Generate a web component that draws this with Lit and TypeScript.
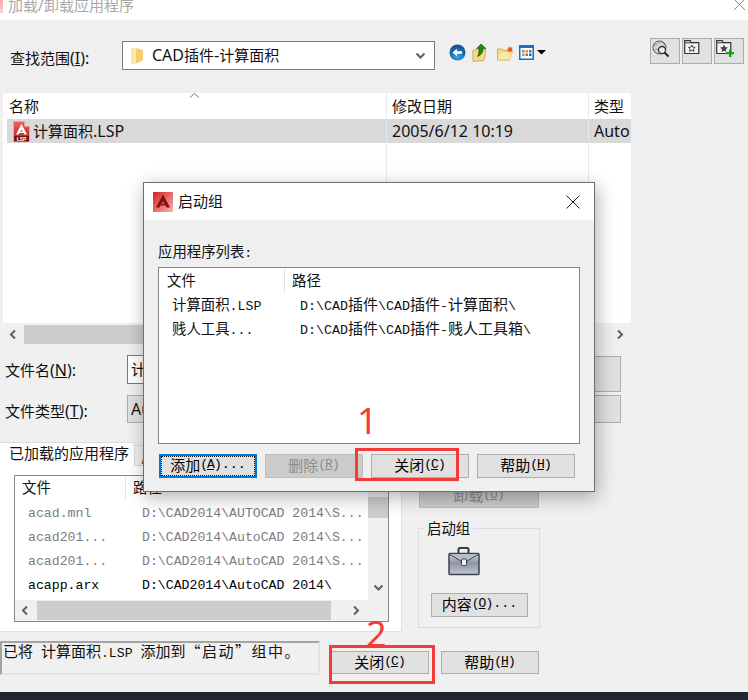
import { LitElement, html, css, svg } from "lit";
import { customElement } from "lit/decorators.js";

const CJK = /([\u3000-\u303f\u4e00-\u9fff\uff00-\uffef\u201c\u201d]+)/;
const t = (s: string) =>
  s.split(CJK).map((p, i) => (i % 2 ? html`<span class="c">${p}</span>` : p));

const chev = (d: "l" | "r" | "d" | "u") => {
  const paths = {
    l: "M7 1.5 3 5.5l4 4",
    r: "M3 1.5 7 5.5l-4 4",
    d: "M1.5 3.5l4 4 4-4",
    u: "M1.5 7.5l4-4 4 4",
  };
  return html`<svg class="chev" width="11" height="11" viewBox="0 0 11 11"><path d=${paths[d]} fill="none" stroke="#606060" stroke-width="2"/></svg>`;
};

const acadIcon = html`<svg width="17" height="21" viewBox="0 0 17 21">
  <defs><linearGradient id="fi" x1="0" y1="0" x2="0" y2="1"><stop offset="0" stop-color="#f0605a"/><stop offset="1" stop-color="#b01c1c"/></linearGradient></defs>
  <path d="M.5.5h11l5 5v15H.5z" fill="url(#fi)" stroke="#b9b9b9"/>
  <path d="M11.5.5v5h5z" fill="#f6d0cc"/>
  <path d="M8.5 3 3 13.5h2.6L8.5 8.5l2.9 5H14z" fill="#fff"/>
  <rect x="5.5" y="10.6" width="6" height="1.4" fill="#fff"/>
  <rect x="1" y="15" width="15" height="5.5" fill="#7d1414"/>
  <text x="8.5" y="19.6" font-size="5" font-family="Liberation Sans" font-weight="700" fill="#fff" text-anchor="middle">LSP</text>
</svg>`;

const dlgIcon = html`<svg width="20" height="20" viewBox="0 0 20 20">
  <defs><linearGradient id="di" x1="0" y1="0" x2="1" y2="1"><stop offset="0" stop-color="#d81f1f"/><stop offset="1" stop-color="#f7b4b0"/></linearGradient></defs>
  <rect width="20" height="20" fill="url(#di)"/>
  <path d="M10 2.5 3 15.5h3.4L10 9l3.6 6.5H17z" fill="#7a1010"/>
  <rect x="6" y="11.5" width="8" height="2" fill="#8e1a1a"/>
</svg>`;

const backIcon = svg`<svg width="17" height="17" viewBox="0 0 17 17">
  <defs><radialGradient id="b" cx=".5" cy=".75" r=".8"><stop offset="0" stop-color="#2ba7f0"/><stop offset="1" stop-color="#123f78"/></radialGradient></defs>
  <circle cx="8.5" cy="8.5" r="8" fill="url(#b)"/>
  <path d="M3.5 8.5 8 4.8v2.4h5v2.6H8v2.4z" fill="#fff"/>
</svg>`;

const upIcon = svg`<svg width="17" height="19" viewBox="0 0 17 19">
  <path d="M.8 7.5 10 5l1 2 3-.5-2 11-11 1z" fill="#f7d98a" stroke="#c9a244" stroke-width=".8"/>
  <path d="M9 1 4.5 5.5H7c0 3 0 5-1.5 8 4-1.5 5.5-4 5.5-8h3z" fill="#1e8a12" stroke="#0f5d09" stroke-width=".6"/>
</svg>`;

const newIcon = svg`<svg width="17" height="15" viewBox="0 0 17 15">
  <path d="M.5 3h5l1 1.5h6l-1 .5h4l-3 9H.5z" fill="#f6d880" stroke="#c9a244" stroke-width=".8"/>
  <path d="M.8 13.5 3.5 6.500h12l-3 7z" fill="#fbe7a8"/>
  <path d="M13 0v7M9.600 3.500h6.800M10.600 1.100l4.800 4.800M15.400 1.100l-4.800 4.800" stroke="#f9a64a" stroke-width=".7"/>
  <circle cx="13" cy="3.500" r="2.300" fill="#f05a1c"/>
</svg>`;

const viewIcon = svg`<svg width="27" height="15" viewBox="0 0 27 15">
  <rect x=".75" y=".75" width="13.500" height="13.500" fill="#fff" stroke="#1470d0" stroke-width="1.500"/>
  <rect x="0" y="0" width="15" height="3" fill="#1470d0"/>
  <rect x="3" y="5" width="2.500" height="2.500" fill="#888"/><rect x="6.500" y="5" width="2.500" height="2.500" fill="#d8a020"/><rect x="10" y="5" width="2.500" height="2.500" fill="#3f8f3f"/>
  <rect x="3" y="8.500" width="2.500" height="2.500" fill="#999"/><rect x="6.500" y="8.500" width="2.500" height="2.500" fill="#d06020"/><rect x="10" y="8.500" width="2.500" height="2.500" fill="#2060c0"/>
  <path d="M18 5h9l-4.500 4.500z" fill="#000"/>
</svg>`;

const folderIcon = html`<svg width="13" height="17" viewBox="0 0 13 17">
  <path d="M0 1h6l6 2v10l-7 3.500H0z" fill="#f6d98c"/>
  <path d="M0 1h5v15.500H0z" fill="#fbe7ae"/>
  <path d="M5 2l7 1v10l-7 3.500z" fill="#f3cd6e"/>
</svg>`;

const globeIcon = svg`<svg width="18" height="18" viewBox="0 0 18 18">
  <circle cx="7.500" cy="7.500" r="6.500" fill="#d8d8d8" stroke="#555"/>
  <path d="M2 5c3 1 3-2 6-3M3 10c2-2 4 0 4 3M10 2c1 2 2 2 3 3" fill="none" stroke="#888"/>
  <circle cx="10" cy="10" r="3.500" fill="#eee" stroke="#333" stroke-width="1.300"/>
  <path d="M12.500 12.500 16.500 16.500" stroke="#222" stroke-width="2"/>
</svg>`;

const favIcon = (plus: boolean) => svg`<svg width="${plus ? 19 : 16}" height="${plus ? 17 : 14}" viewBox="0 0 ${plus ? 19 : 16} ${plus ? 17 : 14}">
  <path d="M.7 2.500V.7h5.500l1 1.800h7.600v11H.7z" fill="#f4f4f0" stroke="#333" stroke-width="1.200"/>
  <path d="M.7 2.800h14" stroke="#333"/>
  ${plus
    ? svg`<path d="M8 4.500l1.200 2.600 2.800.3-2.100 1.900.6 2.800L8 10.700l-2.500 1.400.6-2.800L4 7.400l2.800-.3z" fill="#444"/>
       <path d="M13 9.500h2.400v2.400h2.600v2.400h-2.600V17H13v-2.700h-2.600v-2.400H13z" fill="#14a014"/>`
    : svg`<path d="M7.800 5l1 2.200 2.400.2-1.800 1.600.5 2.400-2.100-1.200-2.100 1.200.5-2.400-1.800-1.600 2.400-.2z" fill="none" stroke="#444"/>`}
</svg>`;

const caseIcon = html`<svg width="32" height="29" viewBox="0 0 32 29">
  <defs><linearGradient id="c" x1="0" y1="0" x2="0" y2="1"><stop offset="0" stop-color="#dfe2e9"/><stop offset=".45" stop-color="#8c93a3"/><stop offset="1" stop-color="#c2c6cf"/></linearGradient></defs>
  <rect x="10.500" y="1" width="10" height="7" rx="1.500" fill="none" stroke="#333a4a" stroke-width="2"/>
  <rect x="1" y="6.500" width="30" height="21" rx="1" fill="url(#c)" stroke="#3a4152" stroke-width="1.500"/>
  <path d="M1.500 7.500 13 14h6l11.500-6.500" fill="#b9bec9" stroke="#3a4152"/>
  <rect x="13.500" y="12" width="5" height="6.500" rx="1" fill="#f6f6f2" stroke="#333a4a"/>
</svg>`;

const btn = (label: string, key: string, suffix = "", cls = "") => html`<button class="btn ${cls}" tabindex="-1">
  <span class="face"><span class="c">${label}</span><span class="k">(<u>${key}</u>)</span><span class="dots">${suffix}</span></span>
</button>`;

@customElement("app-root")
export class AppRoot extends LitElement {
  static styles = css`
    :host {
      display: block;
      position: relative;
      width: 748px;
      height: 700px;
      overflow: hidden;
      background: #f0f0f0;
      color: #111;
    }
    .c { font-family: "Noto Sans CJK SC", sans-serif; }
    .ui { font: 16px/22px "Noto Sans", "Noto Sans CJK SC", sans-serif; white-space: nowrap; }
    .ui .c { font-size: 15px; }
    .mono { font: 13.2px/20px "Liberation Mono", "Noto Sans CJK SC", monospace; white-space: pre; }
    .mono .c { font-size: 14.4px; }
    .mono .p .c, .mono.p .c { font-size: 15px; }
    u { text-underline-offset: 1px; }
    .chev { display: block; }

    .title { height: 20px; background: #fff; display: flex; overflow: hidden; position: relative; }
    .title .mark { width: 3px; height: 13px; background: linear-gradient(#f7a5a0, #f9d2cf); }
    .title .name { margin: -6px 0 0 5px; color: #a9a9a9; line-height: 22px; }
    .title svg { margin: 0 2px 0 auto; }

    .toolbar { height: 73px; background: #efefef; display: flex; align-items: flex-start; padding: 21px 4px 0 10px; box-sizing: border-box; }
    .toolbar .lbl { width: 112px; margin-top: 6px; }
    .combo { width: 313px; height: 29px; box-sizing: border-box; border: 1px solid #7a7a7a; background: #fff; display: flex; align-items: center; padding: 0 8px; }
    .combo .txt { margin: -2px 0 0 8px; flex: 1; }
    .tools { display: flex; margin: 3px 0 0 14px; align-items: flex-start; }
    .tools svg { display: block; }
    .tools .up { margin-left: 6px; margin-top: -1px; }
    .tools .new { margin-left: 8px; margin-top: 2px; }
    .tools .view { margin-left: 5px; margin-top: 1px; }
    .rbtns { display: flex; gap: 2px; margin: -3px 0 0 auto; }
    .rbtn { width: 30px; height: 26px; box-sizing: border-box; border: 1px solid #adadad; background: #e1e1e1; padding: 1px 0 0 1px; }
    .rbtn svg { display: block; }

    .list { height: 230px; margin-left: 3px; width: 628px; background: #fff; display: grid; grid-template-columns: 383px 202px 43px; position: relative; overflow: hidden; }
    .col { border-left: 1px solid #e4ebf4; min-width: 0; overflow: hidden; }
    .col:first-child { border-left: 0; padding-left: 4px; }
    .hd { height: 26px; padding: 2px 0 0 5px; box-sizing: border-box; }
    .cell { height: 24px; background: #d9d9d9; display: flex; align-items: center; padding-left: 5px; }
    .col:last-child .hd, .col:last-child .cell { padding-left: 6px; }
    .col:first-child .cell { padding-left: 6px; gap: 3px; }
    .col:first-child .hd { padding-left: 2px; }
    .sort { position: absolute; left: 186px; top: -3px; }

    .hbar { height: 22px; width: 631px; display: flex; align-items: center; }
    .hbar .a1 { margin-left: 8px; width: 16px; }
    .hbar .th { width: 560px; height: 19px; background: #cdcdcd; }
    .hbar .rest { margin: 0 5px 0 auto; }

    .frow { display: flex; align-items: flex-start; padding-left: 5px; }
    .frow .lbl { width: 122px; }
    .r1 { height: 36px; margin-top: 10px; }
    .r2 { height: 28px; margin-top: 4px; margin-bottom: 19px; }
    .r1 .lbl { margin-top: 4px; }
    .r2 .lbl { margin-top: 5px; }
    .input { width: 420px; height: 29px; box-sizing: border-box; border: 1px solid #7a7a7a; background: #fff; padding: 2px 0 0 3px; overflow: hidden; }
    .load { width: 74px; height: 36px; box-sizing: border-box; margin-top: 1px; border: 1px solid #adadad; background: #e1e1e1; }
    .type { width: 494px; height: 28px; box-sizing: border-box; border: 1px solid #adadad; background: #e1e1e1; padding: 2px 0 0 3px; overflow: hidden; }

    .lower { display: flex; height: 190px; }
    .left { width: 402px; display: flex; flex-direction: column; }
    .tabs { height: 24px; display: flex; align-items: flex-end; }
    .tab { box-sizing: border-box; }
    .t1 { width: 135px; height: 24px; background: #fff; border: 1px solid #dcdcdc; border-width: 1px 1px 0 0; padding: 0 0 0 9px; line-height: 20px; }
    .t2 { width: 60px; height: 21px; background: #f0f0f0; border: 1px solid #dcdcdc; border-left: 0; padding: 0 0 0 6px; line-height: 20px; }
    .panel { flex: 1; background: #fff; border: 1px solid #dfdfdf; border-width: 0 1px 1px 0; padding: 9px 12px 9px 14px; box-sizing: border-box; }
    .apps { height: 147px; box-sizing: border-box; border: 1px solid #85888f; display: flex; flex-direction: column; background: #f0f0f0; }
    .top { flex: 1; display: flex; min-height: 0; }
    .rows { width: 353px; background: #fff; }
    .ahd { height: 24px; display: flex; overflow: hidden; }
    .ahd .a { width: 103px; height: 24px; box-sizing: content-box; padding: 1px 0 0 7px; border-right: 1px solid #e6e6e6; }
    .ahd .b { padding: 1px 0 0 7px; }
    .arow { height: 24px; display: flex; align-items: center; padding: 4px 0 0 13px; box-sizing: border-box; color: #7d7d7d; }
    .arow.on { color: #000; }
    .arow .n { width: 114px; }
    .vb { width: 20px; display: flex; flex-direction: column; align-items: center; }
    .vb .th { width: 20px; height: 21px; margin-top: 21px; background: #cdcdcd; }
    .vb .chev { margin-top: auto; margin-bottom: 7px; }
    .hb { height: 21px; display: flex; align-items: center; }
    .hb .chev:first-child { margin-left: 5px; }
    .hb .th { margin-left: 6px; width: 294px; height: 19px; background: #cdcdcd; }
    .hb .chev:last-child { margin-left: 20px; }

    .btn { display: block; width: 98px; height: 24px; padding: 0; box-sizing: border-box; border: 1px solid #adadad; background: #e1e1e1; color: #000; cursor: default; font: 13px/20px "Liberation Mono", "Noto Sans CJK SC", monospace; }
    .btn .face { display: flex; justify-content: center; align-items: center; height: 100%; box-sizing: border-box; white-space: pre; padding-bottom: 2px; }
    .btn .c { font-size: 15px; }
    .btn .k { letter-spacing: -1px; margin-right: 1px; }
    .btn .dots { font-size: 13.33px; }
    .btn.off { background: #cbcbcb; color: #8c8c8c; border-color: #bdbdbd; }
    .btn.focus { border: 2px solid #0078d7; }
    .btn.focus .face { border: 1px dotted #111; }

    .right { margin-left: 16px; width: 122px; }
    .btn.un { width: 120px; margin: 42px 0 0 1px; height: 24px; }
    fieldset { margin: 10px 0 0; padding: 0; width: 122px; height: 110px; box-sizing: border-box; border: 1px solid #dcdcdc; }
    legend { margin-left: 5px; padding: 0 3px; height: 20px; }
    .case { display: block; margin: 9px 0 0 29px; }
    .case svg { display: block; }
    .btn.content { margin: 17px 0 0 12px; width: 97px; }

    .bottom { height: 60px; display: flex; align-items: flex-start; }
    .status { width: 320px; height: 34px; margin-top: 9px; box-sizing: border-box; border: 2px solid; border-color: #a3a3a3 #e2e2e2 #e2e2e2 #a3a3a3; padding: 0 0 0 1px; line-height: 15px; }
    .status .q { letter-spacing: 1.5px; }
    .bottom .btn { margin-top: 19px; height: 23px; }
    .bottom .c1 { margin-left: 11px; }
    .bottom .c2 { margin-left: 12px; }
    .dark { height: 8px; background: #1f2630; }

    .dialog { position: absolute; left: 143px; top: 182px; width: 452px; height: 310px; box-sizing: border-box; border: 1px solid #6e6e6e; background: #efefef; box-shadow: 2px 5px 18px rgba(0, 0, 0, 0.32); }
    .dt { height: 37px; background: #fff; display: flex; align-items: center; padding: 0 14px 0 9px; }
    .dt .nm { margin: -2px 0 0 5px; flex: 1; }
    .db { padding: 21px 0 0 14px; }
    .lab { height: 20px; }
    .dl { width: 422px; height: 177px; margin-top: 6px; box-sizing: border-box; border: 1px solid #7f848c; background: #fff; }
    .dh { height: 25px; display: flex; overflow: hidden; }
    .dh .a { width: 117px; padding: 2px 0 0 8px; border-right: 1px solid #e4e4e4; }
    .dh .b { padding: 2px 0 0 7px; }
    .dr { height: 24px; display: flex; align-items: center; padding-left: 13px; font-size: 13.33px; overflow: hidden; }
    .dr .n { width: 128px; }
    .dbtns { display: flex; gap: 8px; margin: 10px 0 0 1px; }

    .red { position: absolute; box-sizing: border-box; border: 3px solid #f53a3a; }
    .num { position: absolute; color: #f53a3a; font: 36px/36px "Noto Sans", sans-serif; }
    .b1 { left: 355px; top: 448px; width: 104px; height: 33px; }
    .n1 { left: 357px; top: 403px; }
    .b2 { left: 329px; top: 645px; width: 106px; height: 39px; }
    .n2 { left: 366px; top: 616px; }
  `;

  render() {
    const apps: [string, string, boolean][] = [
      ["acad.mnl", "D:\\CAD2014\\AUTOCAD 2014\\S...", false],
      ["acad201...", "D:\\CAD2014\\AutoCAD 2014\\S...", false],
      ["acad201...", "D:\\CAD2014\\AutoCAD 2014\\S...", false],
      ["acapp.arx", "D:\\CAD2014\\AutoCAD 2014\\", true],
    ];
    return html`
      <div class="title">
        <div class="mark"></div>
        <div class="name ui">${t("加载/卸载应用程序")}</div>
        <svg width="13" height="11" viewBox="0 0 13 11"><path d="M1 -1 12 10M12 -1 1 10" stroke="#8a8a8a" fill="none"/></svg>
      </div>
      <div class="toolbar">
        <div class="lbl ui">${t("查找范围(")}<u>I</u>):</div>
        <div class="combo">
          ${folderIcon}
          <span class="txt ui">${t("CAD插件-计算面积")}</span>
          ${chev("d")}
        </div>
        <div class="tools">
          <span>${backIcon}</span><span class="up">${upIcon}</span><span class="new">${newIcon}</span><span class="view">${viewIcon}</span>
        </div>
        <div class="rbtns">
          <div class="rbtn">${globeIcon}</div>
          <div class="rbtn">${favIcon(false)}</div>
          <div class="rbtn">${favIcon(true)}</div>
        </div>
      </div>
      <div class="list">
        <div class="col"><div class="hd ui">${t("名称")}</div><div class="cell ui">${acadIcon}<span>${t("计算面积.LSP")}</span></div></div>
        <div class="col"><div class="hd ui">${t("修改日期")}</div><div class="cell ui">2005/6/12 10:19</div></div>
        <div class="col"><div class="hd ui">${t("类型")}</div><div class="cell ui">Auto</div></div>
        <svg class="sort" width="11" height="11" viewBox="0 0 11 11"><path d="M1 7.500l4.500-4 4.500 4" fill="none" stroke="#777"/></svg>
      </div>
      <div class="hbar">
        <span class="a1">${chev("l")}</span><div class="th"></div><span class="rest">${chev("r")}</span>
      </div>
      <div class="frow r1">
        <div class="lbl ui">${t("文件名(")}<u>N</u>):</div>
        <div class="input ui">${t("计算面积.LSP")}</div>
        <div class="load"></div>
      </div>
      <div class="frow r2">
        <div class="lbl ui">${t("文件类型(")}<u>T</u>):</div>
        <div class="type ui">AutoCAD</div>
      </div>
      <div class="lower">
        <div class="left">
          <div class="tabs">
            <div class="tab t1 ui">${t("已加载的应用程序")}</div>
            <div class="tab t2 ui">${t("启动组")}</div>
          </div>
          <div class="panel">
            <div class="apps">
              <div class="top">
                <div class="rows">
                  <div class="ahd mono"><div class="a">${t("文件")}</div><div class="b">${t("路径")}</div></div>
                  ${apps.map(
                    ([n, p, on]) => html`<div class="arow mono ${on ? "on" : ""}"><span class="n">${n}</span><span>${p}</span></div>`
                  )}
                </div>
                <div class="vb"><div class="th"></div>${chev("d")}</div>
              </div>
              <div class="hb">${chev("l")}<div class="th"></div>${chev("r")}</div>
            </div>
          </div>
        </div>
        <div class="right">
          ${btn("卸载", "U", "", "off un")}
          <fieldset>
            <legend class="mono">${t("启动组")}</legend>
            <span class="case">${caseIcon}</span>
            ${btn("内容", "O", "...", "content")}
          </fieldset>
        </div>
      </div>
      <div class="bottom">
        <div class="status mono p">${t("已将 计算面积.LSP 添加到")}<span class="q">${t("“启动”组中。")}</span></div>
        ${btn("关闭", "C", "", "c1")}
        ${btn("帮助", "H", "", "c2")}
      </div>
      <div class="dark"></div>

      <div class="dialog">
        <div class="dt">
          ${dlgIcon}
          <span class="nm ui">${t("启动组")}</span>
          <svg width="14" height="14" viewBox="0 0 14 14"><path d="M.5.5l13 13M13.500.5l-13 13" stroke="#222" fill="none"/></svg>
        </div>
        <div class="db">
          <div class="mono lab">${t("应用程序列表:")}</div>
          <div class="dl">
            <div class="dh mono"><div class="a">${t("文件")}</div><div class="b">${t("路径")}</div></div>
            <div class="dr mono"><span class="n">${t("计算面积.LSP")}</span><span class="p">${t("D:\\CAD插件\\CAD插件-计算面积\\")}</span></div>
            <div class="dr mono"><span class="n">${t("贱人工具...")}</span><span class="p">${t("D:\\CAD插件\\CAD插件-贱人工具箱\\")}</span></div>
          </div>
          <div class="dbtns">
            ${btn("添加", "A", "...", "focus")}
            ${btn("删除", "R", "", "off")}
            ${btn("关闭", "C")}
            ${btn("帮助", "H")}
          </div>
        </div>
      </div>

      <div class="red b1"></div>
      <div class="num n1">1</div>
      <div class="red b2"></div>
      <div class="num n2">2</div>
    `;
  }
}
